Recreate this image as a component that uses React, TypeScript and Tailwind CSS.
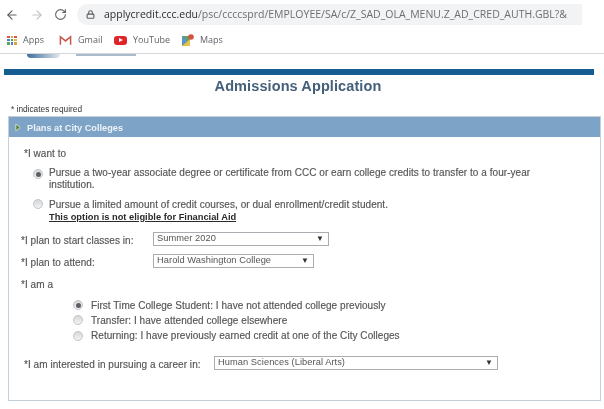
import React from 'react';
import { ArrowLeft, ArrowRight, RotateCw, Lock } from 'lucide-react';

const Radio = ({ checked = false }: { checked?: boolean }) => (
  <span className="flex h-[10px] w-[10px] shrink-0 items-center justify-center rounded-full border border-[#c0c4c8] bg-gradient-to-b from-[#d5d7da] to-[#f2f3f4]">
    {checked && <span className="h-[5px] w-[5px] rounded-full bg-[#5c5f63]" />}
  </span>
);

const Select = ({ value, className }: { value: string; className: string }) => (
  <div className={`mb-[2px] flex h-[14px] items-center justify-between border border-[#a9adb1] bg-white pl-[3px] pr-[4px] text-[9.3px] tracking-[0.05px] text-[#555] [-webkit-text-stroke:0] ${className}`}>
    <span>{value}</span>
    <span className="text-[8px] text-[#333]">▼</span>
  </div>
);

const Bookmark = ({ icon, label, className }: { icon: React.ReactNode; label: string; className: string }) => (
  <div className={`flex items-center gap-[6px] ${className}`}>
    {icon}
    <span>{label}</span>
  </div>
);

export default function App() {
  return (
    <div className="h-[409px] w-[604px] overflow-hidden bg-white font-['Liberation_Sans',sans-serif] text-[#555] blur-[0.35px]">
      {/* Browser toolbar */}
      <div className="flex h-[27px] items-center pl-[5px] pt-[2px] text-[#5f6368]">
        <ArrowLeft size={14} strokeWidth={2} />
        <ArrowRight size={14} strokeWidth={2} className="ml-[11px] text-[#c0c3c6]" />
        <RotateCw size={13} strokeWidth={2} className="ml-[10px]" />
        <div className="ml-[10px] flex h-[21px] w-[505px] items-center rounded-l-full bg-[#f1f3f4] pl-[9px] font-['Open_Sans',sans-serif] text-[10.5px] text-[#6b6f73]">
          <Lock size={9} strokeWidth={3} className="mr-[8px] text-[#5f6368]" />
          <span className="whitespace-nowrap pl-[1px]"><span className="text-[#2b2f33]">applycredit.ccc.edu</span>/psc/ccccsprd/EMPLOYEE/SA/c/Z_SAD_OLA_MENU.Z_AD_CRED_AUTH.GBL?&amp;</span>
        </div>
      </div>

      {/* Bookmarks bar */}
      <div className="flex h-[27px] items-center border-b border-[#d4d6d8] pl-[7px] font-['Open_Sans',sans-serif] text-[9px] text-[#5f6368]">
        <Bookmark
          className="w-[52px]"
          label="Apps"
          icon={
            <span className="grid h-[9px] w-[10px] grid-cols-3 gap-[1px]">
              <i className="bg-[#d9534f]" /><i className="bg-[#e2a33a]" /><i className="bg-[#d9534f]" />
              <i className="bg-[#4a7fd4]" /><i className="bg-[#58a55c]" /><i className="bg-[#e2c33a]" />
              <i className="bg-[#58a55c]" /><i className="bg-[#4a7fd4]" /><i className="bg-[#e2a33a]" />
            </span>
          }
        />
        <Bookmark
          className="w-[55px]"
          label="Gmail"
          icon={
            <svg width="13" height="10" viewBox="0 0 14 10" fill="none" stroke="#c9544c" strokeWidth="1.6">
              <path d="M1.5 10V1.500L7 6l5.500-4.500V10" />
            </svg>
          }
        />
        <Bookmark
          className="w-[68px]"
          label="YouTube"
          icon={
            <span className="flex h-[9px] w-[13px] items-center justify-center rounded-[3px] bg-[#e0242b]">
              <span className="h-0 w-0 border-y-[2px] border-l-[4px] border-y-transparent border-l-white" />
            </span>
          }
        />
        <Bookmark
          className="w-[60px]"
          label="Maps"
          icon={
            <svg width="12" height="12" viewBox="0 0 12 12">
              <path d="M0 2h8v10H0z" fill="#5aa469" />
              <path d="M0 12l8-7v7z" fill="#e6c34d" />
              <path d="M0 2l5 5-5 4z" fill="#5f93d8" />
              <circle cx="9" cy="3" r="2.800" fill="#d8503f" />
            </svg>
          }
        />
      </div>

      {/* Cut-off logo strip */}
      <div className="flex h-[15px] items-start pl-[27px]">
        <div className="h-[4px] w-[33px] rounded-b-full bg-gradient-to-r from-[#3f6f9c] to-[#e3e9ef]" />
        <div className="ml-[16px] h-[2px] w-[60px] bg-[#a9bacb]" />
      </div>

      <div className="mx-[4px] h-[6px] w-[590px] bg-[#155d91]" />

      <h1 className="h-[23px] pr-[8px] text-center text-[14.5px] leading-[23px] font-bold tracking-[0.1px] text-[#45607a]">
        Admissions Application
      </h1>

      <p className="ml-[11px] mt-[5px] h-[12px] text-[8.3px] leading-[12px] text-[#333]">* indicates required</p>

      {/* Plans panel */}
      <div className="ml-[8px] mt-[1px] h-[285px] w-[593px] border border-[#c2d0dc] text-[10px] tracking-[0.05px]">
        <div className="flex h-[20px] items-center bg-[#7da3c6] pl-[6px] font-bold tracking-normal text-[#eef3f8]">
          <svg width="6" height="9" viewBox="0 0 7 9" className="mt-[1px]">
            <path d="M1 .5L6 4.500 1 8.500z" fill="#4e7a3a" stroke="#dfe9c8" />
          </svg>
          <span className="ml-[6px] mt-[3px] text-[9.2px]">Plans at City Colleges</span>
        </div>

        <div className="pl-[15px] pt-[11px] [-webkit-text-stroke:0.15px_#555]">
          <div className="h-[12px] leading-[12px]">*I want to</div>

          <div className="ml-[9px] mt-[7px] flex gap-[6px]">
            <span className="pt-[2px]"><Radio checked /></span>
            <div className="w-[510px] leading-[12px]">
              Pursue a two-year associate degree or certificate from CCC or earn college credits to transfer to a four-year institution.
            </div>
          </div>

          <div className="ml-[9px] mt-[7px] flex gap-[6px]">
            <span className="pt-[1px]"><Radio /></span>
            <div className="leading-[13px]">
              <div>Pursue a limited amount of credit courses, or dual enrollment/credit student.</div>
              <div className="text-[9.3px] font-bold tracking-normal text-[#2a2a2a] underline [-webkit-text-stroke:0]">This option is not eligible for Financial Aid</div>
            </div>
          </div>

          <div className="-ml-[3px] mt-[9px] flex h-[14px] items-center">
            <span className="w-[132px]">*I plan to start classes in:</span>
            <Select value="Summer 2020" className="w-[176px]" />
          </div>
          <div className="-ml-[3px] mt-[8px] flex h-[14px] items-center">
            <span className="w-[132px]">*I plan to attend:</span>
            <Select value="Harold Washington College" className="w-[161px]" />
          </div>

          <div className="-ml-[3px] mt-[10px] h-[12px] leading-[12px]">*I am a</div>

          <div className="ml-[49px] mt-[8px] flex flex-col gap-[3.3px]">
            <div className="flex h-[12px] items-center gap-[8px]"><Radio checked /><span>First Time College Student: I have not attended college previously</span></div>
            <div className="flex h-[12px] items-center gap-[8px]"><Radio /><span>Transfer: I have attended college elsewhere</span></div>
            <div className="flex h-[12px] items-center gap-[8px]"><Radio /><span>Returning: I have previously earned credit at one of the City Colleges</span></div>
          </div>

          <div className="mt-[15px] flex h-[15px] items-center">
            <span className="w-[190px]">*I am interested in pursuing a career in:</span>
            <Select value="Human Sciences (Liberal Arts)" className="w-[284px] border-[#8fb0c8]" />
          </div>
        </div>
      </div>
    </div>
  );
}
